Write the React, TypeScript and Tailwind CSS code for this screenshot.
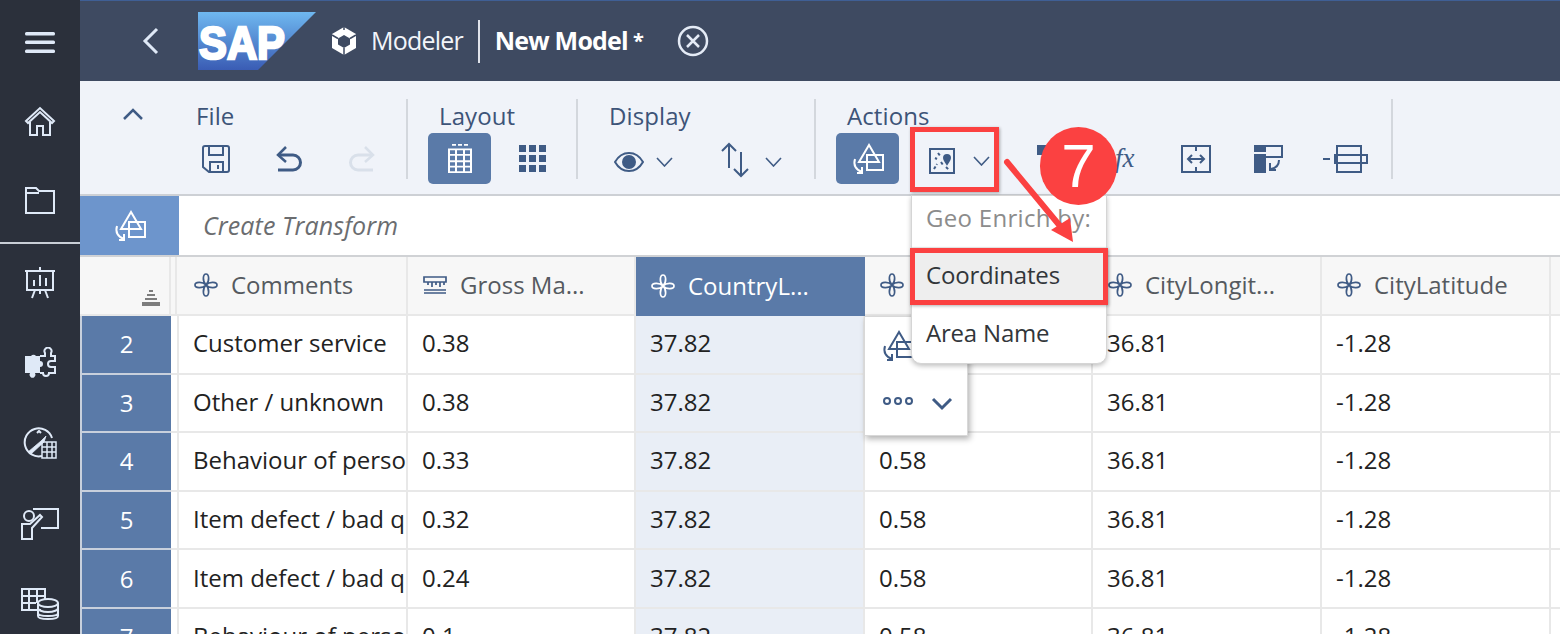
import React from 'react';

const font = { fontFamily: '"Open Sans", "Noto Sans", sans-serif' };

type IconProps = { className?: string };

function Svg({ className, size = 32, box = 32, children, sw = 2 }: { className?: string; size?: number; box?: number; children: React.ReactNode; sw?: number }) {
  return (
    <svg width={size} height={size} viewBox={`0 0 ${box} ${box}`} fill="none" stroke="currentColor" strokeWidth={sw} className={className}>
      {children}
    </svg>
  );
}

// sidebar icons
const HomeIcon = () => (
  <Svg size={34} box={34}>
    <path d="M3 16 17 3l14 13-2 2L17 7 5 18z" />
    <path d="M7 17v13h7v-9h6v9h7V17" />
  </Svg>
);
const FolderIcon = () => (
  <Svg size={34} box={34}>
    <path d="M3 5h10l3 3h15v22H3z" />
    <path d="M3 10h13" />
  </Svg>
);
const BoardIcon = () => (
  <Svg size={34} box={34}>
    <path d="M17 1v4M4 5h26v19H4zM2 5h30" />
    <path d="M11 20v-6M17 20V9M23 20v-8M12 24l-3 8M22 24l3 8M17 24v4" />
  </Svg>
);
const PuzzleIcon = () => (
  <svg width="32" height="32" viewBox="0 0 32 32">
    <path d="M1 9h6a3 3 0 0 1 5 0h4v5a3 3 0 0 1 0 6v6h-5a3 3 0 1 1-5 0H1z" fill="currentColor" />
    <path d="M16 9h5V6a3.5 3.5 0 1 1 6 0v3h4v5h-4a3 3 0 0 0 0 6h4v6h-6a3 3 0 1 1-6 0h-3" fill="none" stroke="currentColor" strokeWidth="2" />
  </svg>
);
const CompassIcon = () => (
  <svg width="36" height="34" viewBox="0 0 36 34" fill="none" stroke="currentColor" strokeWidth="2">
    <path d="M20 29A14 14 0 1 1 30 11" />
    <path d="M6 25 19 14l5-5-2 6L9 27z" fill="currentColor" strokeWidth="0.8" />
    <path d="M15 6l2-2 2 2" />
    <path d="M20 15h14v16H20zM20 20h14M20 25h14M25 15v16M30 15v16" strokeWidth="1.5" />
  </svg>
);
const TeacherIcon = () => (
  <svg width="38" height="32" viewBox="0 0 38 32" fill="none" stroke="currentColor" strokeWidth="2">
    <path d="M12 1h25v19H20" />
    <circle cx="8" cy="8" r="5" />
    <path d="M1 31V16h8l10-9 2 2-10 11v11zM11 20v4" />
  </svg>
);
const TableDbIcon = () => (
  <svg width="38" height="32" viewBox="0 0 38 32" fill="none" stroke="currentColor" strokeWidth="2">
    <path d="M20 22H1V1h23v10M1 8h23M1 15h14M8 1v21M16 1v14" />
    <ellipse cx="27" cy="15" rx="10" ry="4" />
    <path d="M17 15v13c0 2 4 3 10 3s10-1 10-3V15M17 20c0 2 4 4 10 4s10-2 10-4M17 25c0 2 4 3 10 3s10-1 10-3" />
  </svg>
);

// toolbar icons
const SaveIcon = () => (
  <Svg size={30} box={30}>
    <path d="M2 4a2 2 0 0 1 2-2h22a2 2 0 0 1 2 2v22a2 2 0 0 1-2 2H8l-6-5z" />
    <path d="M8 2v9h14V2M9 28V18h13v10M17 21v4" />
  </Svg>
);
const UndoIcon = ({ className }: IconProps) => (
  <svg width="30" height="30" viewBox="0 0 30 30" fill="none" stroke="currentColor" strokeWidth="2.5" className={className}>
    <path d="M12 3 4 11l8 7" />
    <path d="M5 11h14a7 7 0 0 1 0 15H4" strokeWidth="3" />
  </svg>
);
const TableActiveIcon = () => (
  <svg width="26" height="29" viewBox="0 0 26 32" preserveAspectRatio="none" fill="none" stroke="currentColor" strokeWidth="2">
    <path d="M5 1h4M11 1h4M17 1h4" />
    <path d="M2 6h22v25H2zM2 12h22M2 19h22M2 25h22M9 6v25M17 6v25" />
  </svg>
);
const GridIcon = () => (
  <svg width="27" height="27" viewBox="0 0 27 27" fill="currentColor">
    <path d="M0 0h7v7H0zM10 0h7v7h-7zM20 0h7v7h-7zM0 10h7v7H0zM10 10h7v7h-7zM20 10h7v7h-7zM0 20h7v7H0zM10 20h7v7h-7zM20 20h7v7h-7z" />
  </svg>
);
const EyeIcon = () => (
  <svg width="30" height="22" viewBox="0 0 30 22" fill="none" stroke="currentColor" strokeWidth="2">
    <path d="M1 11C5 4 10 2 15 2s10 2 14 9c-4 7-9 9-14 9S5 18 1 11z" />
    <circle cx="15" cy="11" r="6" fill="currentColor" />
  </svg>
);
const SortIcon = () => (
  <svg width="30" height="36" viewBox="0 0 30 36" fill="none" stroke="currentColor" strokeWidth="2">
    <path d="M9 26V2M2 9l7-7 7 7M21 10v24M14 27l7 7 7-7" />
  </svg>
);
const ChevDown = () => (
  <svg width="17" height="10" viewBox="0 0 17 10" fill="none" stroke="currentColor" strokeWidth="1.6">
    <path d="M1 1l7.5 8L16 1" />
  </svg>
);
const TransformIcon = ({ className }: IconProps) => (
  <svg width="34" height="34" viewBox="0 0 34 34" fill="none" stroke="currentColor" strokeWidth="2" className={className}>
    <path d="M18 3 8 20h20z" />
    <path d="M16 13h16v15H16z" />
    <path d="M4 17c-2 6 1 11 7 13M11 25v6H6" />
  </svg>
);
const GeoIcon = () => (
  <svg width="26" height="26" viewBox="0 0 26 26" fill="none" stroke="currentColor" strokeWidth="2">
    <path d="M1 1h24v24H1z" />
    <path d="M5 21l3-5M9 5l3 4M12 14l2 3M17 19l3 3M6 10l2 1" strokeDasharray="3 2" />
    <path d="M18 16c-2-3-3-4-3-6a3 3 0 0 1 6 0c0 2-1 3-3 6z" fill="currentColor" />
  </svg>
);
const ColWidthIcon = () => (
  <svg width="30" height="28" viewBox="0 0 30 28" fill="none" stroke="currentColor" strokeWidth="2">
    <path d="M1 1h28v26H1zM15 1v5M15 22v5M7 14h16M11 10l-4 4 4 4M19 10l4 4-4 4" />
  </svg>
);
const MoveColIcon = () => (
  <svg width="30" height="28" viewBox="0 0 30 28" fill="none" stroke="currentColor" strokeWidth="2">
    <path d="M1 1h10v5H1zM1 10h10v17H1z" fill="currentColor" />
    <path d="M11 1h17v11H11" />
    <path d="M25 15c0 5-3 8-8 9M16 18v7h6" />
  </svg>
);
const SplitIcon = () => (
  <svg width="46" height="28" viewBox="0 0 46 28" fill="none" stroke="currentColor" strokeWidth="2">
    <path d="M1 14h7M15 1h24v26H15zM13 10h32v8H13z" />
  </svg>
);
const Flower = ({ className }: IconProps) => (
  <svg width="24" height="24" viewBox="0 0 24 24" fill="none" stroke="currentColor" strokeWidth="1.7" className={className}>
    <path d="M12 12C8 8 9 1 12 1s4 7 0 11zM12 12c4-4 11-3 11 0s-7 4-11 0zM12 12c4 4 3 11 0 11s-4-7 0-11zM12 12c-4 4-11 3-11 0s7-4 11 0z" />
  </svg>
);
const Ruler = () => (
  <svg width="24" height="18" viewBox="0 0 24 18" fill="none" stroke="#3f5b85" strokeWidth="1.7">
    <path d="M1 1h22v5H1zM1 1v4M5 6v3M9 6v5M13 6v3M17 6v5M21 6v3" />
    <path d="M1 14h22M1 17h22" strokeWidth="1.3" />
  </svg>
);

function SideItem({ h, children }: { h: string; children: React.ReactNode }) {
  return <div className={`flex shrink-0 items-center justify-center ${h}`}>{children}</div>;
}

function Group({ label, w, labelPl, rowPl, children }: { label: string; w: string; labelPl: string; rowPl: string; children: React.ReactNode }) {
  return (
    <div className={`h-full shrink-0 ${w}`}>
      <div className={`pt-[20px] text-[24px] leading-[30px] tracking-[0.1px] text-[#3d5478] ${labelPl}`}>{label}</div>
      <div className={`mt-[2px] flex h-[51px] items-center text-[#3f5b85] ${rowPl}`}>{children}</div>
    </div>
  );
}

const Sep = () => <div className="mt-[18px] h-[80px] w-[2px] shrink-0 bg-[#d3d7dd]" />;

const colWidths = ['w-[229px]', 'w-[228px]', 'w-[229px]', 'w-[228px]', 'w-[229px]', 'w-[229px]', 'w-[60px]'];

const rows = [
  ['2', 'Customer service', '0.38', '37.82', '0.58', '36.81', '-1.28'],
  ['3', 'Other / unknown', '0.38', '37.82', '0.58', '36.81', '-1.28'],
  ['4', 'Behaviour of personnel', '0.33', '37.82', '0.58', '36.81', '-1.28'],
  ['5', 'Item defect / bad quality', '0.32', '37.82', '0.58', '36.81', '-1.28'],
  ['6', 'Item defect / bad quality', '0.24', '37.82', '0.58', '36.81', '-1.28'],
  ['7', 'Behaviour of personnel', '0.1', '37.82', '0.58', '36.81', '-1.28'],
];

const headers = [
  { name: 'Comments', icon: 'flower' },
  { name: 'Gross Ma...', icon: 'ruler' },
  { name: 'CountryL...', icon: 'flower', selected: true },
  { name: 'CountryL...', icon: 'flower' },
  { name: 'CityLongit...', icon: 'flower' },
  { name: 'CityLatitude', icon: 'flower' },
  { name: '', icon: '' },
];

export default function App() {
  return (
    <div className="relative flex h-[634px] w-[1560px] overflow-hidden bg-white" style={font}>
      {/* left nav */}
      <nav className="flex w-[80px] shrink-0 flex-col overflow-hidden bg-[#2b303b] text-[#dfe9f7]">
        <SideItem h="h-[84px]">
          <svg width="30" height="21" viewBox="0 0 30 21" fill="currentColor">
            <rect width="30" height="3.5" rx="1.5" />
            <rect y="8.5" width="30" height="3.5" rx="1.5" />
            <rect y="17.5" width="30" height="3.5" rx="1.5" />
          </svg>
        </SideItem>
        <SideItem h="h-[76px]"><HomeIcon /></SideItem>
        <SideItem h="h-[80px]"><FolderIcon /></SideItem>
        <div className="mt-[2px] h-[2px] shrink-0 bg-[#c9ced6]" />
        <SideItem h="h-[78px]"><BoardIcon /></SideItem>
        <SideItem h="h-[82px]"><PuzzleIcon /></SideItem>
        <SideItem h="h-[80px]"><CompassIcon /></SideItem>
        <SideItem h="h-[80px]"><TeacherIcon /></SideItem>
        <SideItem h="h-[80px]"><TableDbIcon /></SideItem>
      </nav>

      <main className="flex min-w-0 flex-1 flex-col">
        {/* shell bar */}
        <header className="flex h-[81px] shrink-0 items-center border-t border-[#3f5f95] bg-[#3e4a61] text-white">
          <svg width="20" height="28" viewBox="0 0 20 28" fill="none" stroke="#dfe9f7" strokeWidth="3" className="ml-[60px]">
            <path d="M17 2 5 14l12 12" />
          </svg>
          <svg width="118" height="58" viewBox="0 0 118 58" className="ml-[38px]">
            <defs>
              <linearGradient id="sapg" x1="0" y1="0" x2="0" y2="1">
                <stop offset="0" stopColor="#6fb8f0" />
                <stop offset="1" stopColor="#3a5cb4" />
              </linearGradient>
            </defs>
            <path d="M0 0h118L60 58H0z" fill="url(#sapg)" />
            <text x="1" y="47" fill="#fff" fontFamily="Liberation Sans" fontWeight="700" fontSize="47" textLength="86" lengthAdjust="spacingAndGlyphs" stroke="#fff" strokeWidth="2.5">SAP</text>
          </svg>
          <svg width="28" height="30" viewBox="0 0 28 30" className="ml-[14px]">
            <path d="M14 1 26 8v14l-12 7L2 22V8z" fill="#fff" />
            <path d="M14 9l6 3.5v6L14 22l-6-3.5v-6z" fill="#3e4a61" />
            <path d="M2 9l6 3.5M26 9l-6 3.5M14 22v7M14 1v3" stroke="#3e4a61" strokeWidth="1.5" />
          </svg>
          <span className="ml-[13px] text-[25px] tracking-[-0.8px] text-[#f2f5fa]">Modeler</span>
          <div className="ml-[15px] h-[43px] w-[2px] bg-[#dfe3ea]" />
          <span className="ml-[15px] text-[25px] font-bold tracking-[-0.8px]">New Model</span>
          <span className="ml-[5px] text-[20px] font-bold">*</span>
          <svg width="32" height="32" viewBox="0 0 32 32" fill="none" stroke="#e4ebf6" strokeWidth="2.5" className="ml-[33px]">
            <circle cx="16" cy="16" r="14" />
            <path d="M10 10l12 12M22 10 10 22" />
          </svg>
        </header>

        {/* toolbar */}
        <section className="flex h-[115px] shrink-0 border-b-2 border-[#cdd0d5] bg-[#f0f3f9]">
          <div className="flex w-[116px] shrink-0 justify-center pt-[26px] text-[#3f5b85]">
            <svg width="22" height="14" viewBox="0 0 22 14" fill="none" stroke="currentColor" strokeWidth="2.5" className="mr-[11px]">
              <path d="M2 12 11 3l9 9" />
            </svg>
          </div>
          <Group label="File" w="w-[210px]" labelPl="" rowPl="pl-[5px]">
            <SaveIcon />
            <div className="ml-[43px]"><UndoIcon /></div>
            <div className="ml-[43px] -scale-x-100 text-[#d9e0ea]"><UndoIcon /></div>
          </Group>
          <Sep />
          <Group label="Layout" w="w-[168px]" labelPl="pl-[31px]" rowPl="pl-[20px]">
            <div className="flex h-[51px] w-[63px] items-center justify-center rounded-[5px] bg-[#5a7aa8] text-white"><TableActiveIcon /></div>
            <div className="ml-[28px]"><GridIcon /></div>
          </Group>
          <Sep />
          <Group label="Display" w="w-[236px]" labelPl="pl-[31px]" rowPl="pl-[36px]">
            <div className="mt-[6px] flex items-center gap-[12px]">
              <EyeIcon />
              <ChevDown />
            </div>
            <div className="ml-[47px] mt-[3px] flex items-center gap-[15px]">
              <SortIcon />
              <div className="mt-[3px]"><ChevDown /></div>
            </div>
          </Group>
          <Sep />
          <Group label="Actions" w="w-[575px]" labelPl="pl-[31px]" rowPl="pl-[20px]">
            <div className="flex h-[51px] w-[63px] items-center justify-center rounded-[5px] bg-[#5a7aa8] text-white"><TransformIcon /></div>
            <div className="ml-[30px] mt-[5px] flex items-center gap-[18px]">
              <GeoIcon />
              <ChevDown />
            </div>
            <div className="ml-[47px] mt-[-17px] h-[10px] w-[22px] shrink-0 bg-[#3f5b85]" />
            <span className="ml-[56px] w-[22px] text-[27px] italic leading-none" style={{ fontFamily: '"Liberation Serif", serif' }}>fx</span>
            <div className="ml-[44px]"><ColWidthIcon /></div>
            <div className="ml-[43px]"><MoveColIcon /></div>
            <div className="ml-[38px]"><SplitIcon /></div>
          </Group>
          <Sep />
        </section>

        {/* transform bar */}
        <section className="flex h-[61px] shrink-0 border-b-2 border-[#d0d2d5] bg-white">
          <div className="flex w-[99px] shrink-0 items-center justify-center bg-[#6d95cc] text-white"><TransformIcon /></div>
          <div className="flex items-center pl-[24px] text-[25px] italic tracking-[0.1px] text-[#6b6d70]">Create Transform</div>
        </section>

        {/* data grid */}
        <section className="text-[24px] text-[#222]">
          <div className="flex h-[59px]">
            <div className="relative flex w-[99px] shrink-0 border-b-2 border-[#e8e8e8] bg-[#f7f7f7]">
              <div className="w-[91px] border-r-2 border-[#e8e8e8]" />
              <div className="w-[6px] border-r-2 border-[#e8e8e8]" />
              <svg width="20" height="16" viewBox="0 0 20 16" fill="none" stroke="#555" strokeWidth="1.3" className="absolute left-[61px] top-[33px]">
                <path d="M8 1h4M6 5h8M4 9h12M1 13h18M1 15h18" />
              </svg>
            </div>
            {headers.map((h, i) => (
              <div
                key={i}
                className={`flex shrink-0 items-center gap-[14px] overflow-hidden whitespace-nowrap border-r-2 pb-[2px] pl-[15px] ${colWidths[i]} ${
                  h.selected
                    ? 'border-[#5a7aa8] bg-[#5a7aa8] text-white'
                    : 'border-b-2 border-[#e8e8e8] bg-[#f7f7f7] text-[#555a60]'
                }`}
              >
                {h.icon === 'flower' && <Flower className={h.selected ? 'text-white' : 'text-[#3f5b85]'} />}
                {h.icon === 'ruler' && <Ruler />}
                <span className="-ml-[1px]">{h.name}</span>
              </div>
            ))}
          </div>
          {rows.map((r) => (
            <div key={r[0]} className="flex h-[58.6px]">
              <div className="flex w-[99px] shrink-0">
                <div className="flex w-[91px] items-center justify-center border-b-2 border-l-2 border-[#c8d0dc] bg-[#5a7aa8] text-white">{r[0]}</div>
                <div className="w-[8px] border-r-2 border-b-2 border-[#e8e8e8]" />
              </div>
              {r.slice(1).map((c, i) => (
                <div
                  key={i}
                  className={`flex shrink-0 items-center overflow-hidden whitespace-nowrap border-r-2 border-b-2 border-[#e8e8e8] pb-[2px] pl-[14px] ${colWidths[i]} ${
                    i === 2 ? 'bg-[#e9eef6]' : ''
                  }`}
                >
                  {c}
                </div>
              ))}
              <div className="w-[60px] border-b-2 border-[#e8e8e8]" />
            </div>
          ))}
        </section>
      </main>

      {/* cell action popover */}
      <div className="absolute left-[864px] top-[316px] h-[120px] w-[104px] border border-[#d8d8d8] bg-white text-[#3f5b85] shadow-[2px_3px_6px_rgba(0,0,0,0.3)]">
        <div className="absolute left-[16px] top-[12px]"><TransformIcon /></div>
        <div className="absolute left-[18px] top-[80px] flex gap-[3px]">
          <span className="h-[8px] w-[8px] rounded-full border-2 border-[#3f5b85]" />
          <span className="h-[8px] w-[8px] rounded-full border-2 border-[#3f5b85]" />
          <span className="h-[8px] w-[8px] rounded-full border-2 border-[#3f5b85]" />
        </div>
        <svg width="22" height="14" viewBox="0 0 22 14" fill="none" stroke="currentColor" strokeWidth="3" className="absolute left-[66px] top-[80px]">
          <path d="M2 2l9 9 9-9" />
        </svg>
      </div>

      {/* geo enrich dropdown */}
      <div className="absolute left-[911px] top-[195px] w-[196px] overflow-hidden rounded-b-[10px] border border-[#d5d5d5] bg-white text-[24px] tracking-[-0.2px] text-[#32363a] shadow-[0_2px_5px_rgba(0,0,0,0.25)]">
        <div className="flex h-[44px] items-center pl-[14px] tracking-[0.3px] text-[#8c8c8c]">Geo Enrich by:</div>
        <div className="mt-[7px] flex h-[56px] items-center bg-[#eeeeee] pl-[14px]">Coordinates</div>
        <div className="flex h-[60px] items-center pl-[14px]">Area Name</div>
      </div>

      {/* tutorial annotations */}
      <div className="absolute left-[910px] top-[127px] h-[65px] w-[89px] border-[5px] border-[#fb4141] shadow-[1px_1px_3px_rgba(0,0,0,0.3)]" />
      <div className="absolute left-[910px] top-[248px] h-[57px] w-[198px] border-[5px] border-[#fb4141] shadow-[1px_1px_3px_rgba(0,0,0,0.3)]" />
      <svg width="100" height="104" viewBox="0 0 100 104" className="absolute left-[994px] top-[142px]">
        <path d="M13 20 66 84" stroke="#fb4141" strokeWidth="6" strokeLinecap="round" />
        <path d="M57 88 76 76l3 24z" fill="#fb4141" />
      </svg>
      <div className="absolute left-[1040px] top-[127px] flex h-[78px] w-[77px] items-center justify-center rounded-full bg-[#fb4141] text-[62px] leading-none text-white" style={{ fontFamily: '"Liberation Sans", sans-serif' }}>
        7
      </div>
    </div>
  );
}
